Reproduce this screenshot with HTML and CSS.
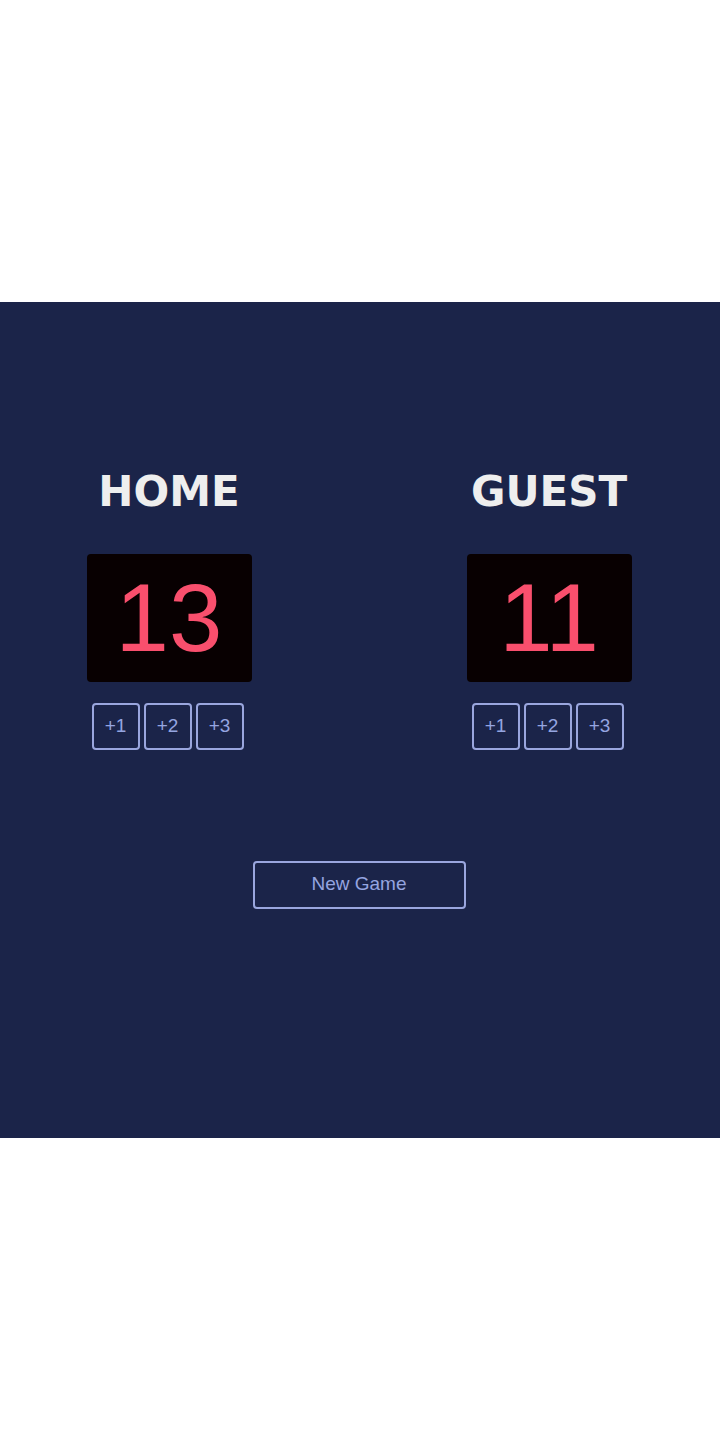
FILE: index.html
```html
<!DOCTYPE html>
<html lang="en">

<head>
    <meta charset="UTF-8">
    <meta name="viewport" content="width=device-width, initial-scale=1.0">
    <title>Basketball Scoreboard</title>
    <link rel="stylesheet" href="styles.css">
</head>

<body>
    <div class="container">
        <div class="teams">
            <div class="team">
                <h2 class="team-name">HOME</h2>
                <div class="score">13</div>
                <div class="btn-row">
                    <button class="btn">+1</button>
                    <button class="btn">+2</button>
                    <button class="btn">+3</button>
                </div>
            </div>
            <div class="team">
                <h2 class="team-name">GUEST</h2>
                <div class="score">11</div>
                <div class="btn-row">
                    <button class="btn">+1</button>
                    <button class="btn">+2</button>
                    <button class="btn">+3</button>
                </div>
            </div>
        </div>
        <button class="new-game">New Game</button>
    </div>
</body>

</html>
```

FILE: styles.css
```css
* {
    margin: 0;
    padding: 0;
    box-sizing: border-box;
}

body {
    background-color: white;
    font-family: "Liberation Sans", Arial, sans-serif;
}

.container {
    margin-top: 302px;
    height: 836px;
    background-color: #1b2449;
    padding-top: 165px;
    padding-right: 2px;
    display: flex;
    flex-direction: column;
    align-items: center;
}

.teams {
    display: flex;
    justify-content: center;
    gap: 200px;
}

.team {
    width: 180px;
    display: flex;
    flex-direction: column;
    align-items: center;
}

.team-name {
    font-family: "DejaVu Sans", Verdana, sans-serif;
    font-weight: bold;
    font-size: 42px;
    color: #eeeeee;
}

.score {
    margin-top: 38px;
    width: 165px;
    height: 128px;
    line-height: 128px;
    text-align: center;
    font-size: 96px;
    color: #f94f6d;
    background-color: #080001;
    border-radius: 4px;
}

.btn-row {
    margin-top: 21px;
    margin-right: 3px;
    display: flex;
    gap: 4px;
}

.btn {
    width: 48px;
    height: 47px;
    padding-bottom: 2px;
    background-color: transparent;
    border: 2px solid #9aa6de;
    border-radius: 4px;
    color: #95a5e0;
    font-family: "Liberation Sans", Arial, sans-serif;
    font-size: 19px;
}

.new-game {
    margin-top: 111px;
    width: 213px;
    height: 48px;
    padding-bottom: 3px;
    background-color: transparent;
    border: 2px solid #9aa6de;
    border-radius: 4px;
    color: #95a5e0;
    font-family: "Liberation Sans", Arial, sans-serif;
    font-size: 19px;
}
```
